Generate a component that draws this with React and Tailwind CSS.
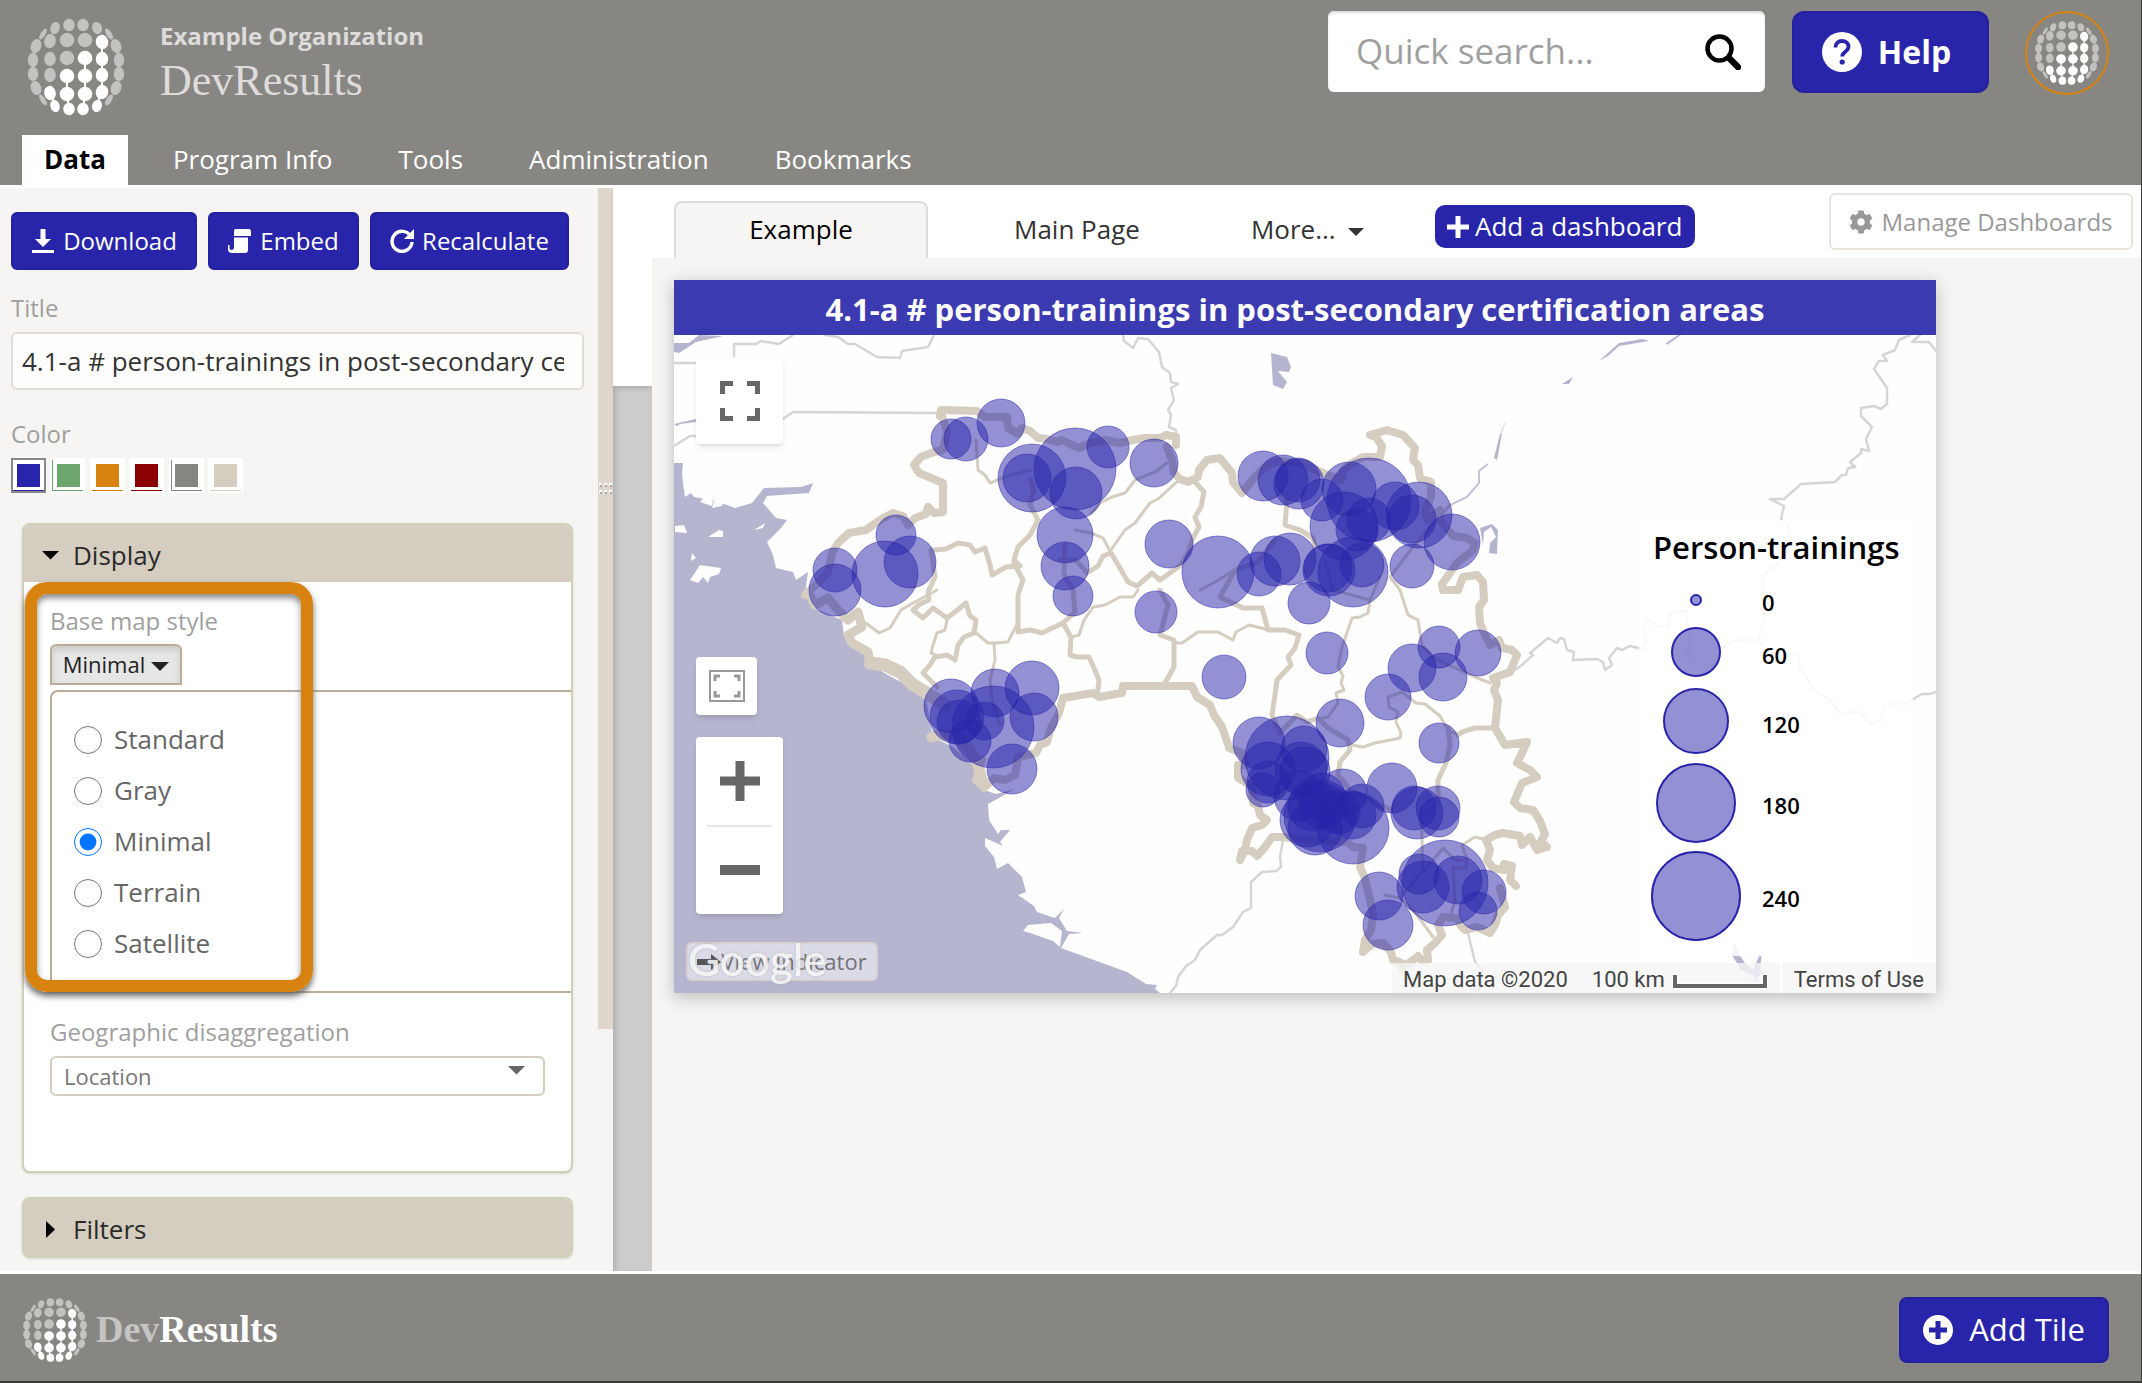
import { useState } from "react";
import { FaCog } from "react-icons/fa";

const COLORS = [
  { name: "Blue", swatch: "bg-[#2825aa]", edge: "border-b border-[#2825aa]" },
  { name: "Green", swatch: "bg-[#6ca66c]", edge: "border-b border-l border-[#6ca66c]" },
  { name: "Orange", swatch: "bg-[#d8830f]", edge: "border-b border-[#d8830f]" },
  { name: "Red", swatch: "bg-[#8b0000]", edge: "border-b border-[#8b0000]" },
  { name: "Gray", swatch: "bg-[#888683]", edge: "border-b border-l border-[#888683]" },
  { name: "Tan", swatch: "bg-[#d5cdbf]", edge: "border-b border-[#d5cdbf]" },
];

const MAP_STYLES = ["Standard", "Gray", "Minimal", "Terrain", "Satellite"];

const NAV = ["Program Info", "Tools", "Administration", "Bookmarks"];

// cx, cy, r
const BUBBLES = [
  [951, 439, 20], [966, 439, 22], [1001, 423, 24], [1032, 478, 34], [1027, 478, 24],
  [1075, 469, 41], [1076, 493, 26], [1108, 447, 21], [1154, 463, 24], [1065, 535, 28],
  [1065, 566, 24], [1073, 596, 20], [896, 535, 20], [910, 562, 26], [885, 574, 33],
  [835, 570, 22], [835, 590, 26], [1169, 544, 24], [1156, 612, 21], [1224, 677, 22],
  [951, 706, 27], [957, 717, 27], [959, 722, 22], [995, 693, 24], [993, 727, 41],
  [985, 721, 19], [970, 741, 21], [1032, 688, 27], [1034, 717, 24], [1012, 769, 25],
  [1263, 476, 25], [1283, 480, 25], [1299, 484, 25], [1298, 480, 22], [1322, 500, 21],
  [1349, 489, 27], [1369, 500, 42], [1344, 526, 34], [1369, 520, 22], [1357, 530, 21],
  [1395, 506, 24], [1419, 515, 33], [1412, 519, 24], [1452, 542, 28], [1412, 566, 22],
  [1218, 572, 36], [1275, 561, 25], [1290, 559, 26], [1259, 574, 22], [1329, 570, 26],
  [1328, 568, 24], [1353, 572, 35], [1362, 565, 22], [1309, 603, 21], [1327, 653, 21],
  [1439, 647, 21], [1478, 653, 23], [1412, 668, 24], [1443, 677, 24], [1388, 697, 23],
  [1340, 723, 24], [1439, 743, 20], [1259, 743, 26], [1287, 758, 42], [1304, 749, 23],
  [1268, 769, 27], [1301, 768, 26], [1305, 772, 25], [1268, 782, 21], [1263, 790, 17],
  [1299, 796, 25], [1343, 793, 24], [1362, 806, 22], [1352, 815, 24], [1353, 828, 36],
  [1392, 788, 25], [1320, 816, 36], [1315, 828, 27], [1307, 820, 27], [1322, 796, 23],
  [1323, 806, 23], [1313, 806, 25], [1338, 812, 22], [1417, 813, 26], [1414, 808, 22],
  [1438, 808, 22], [1439, 817, 20], [1445, 883, 43], [1419, 874, 20], [1423, 887, 26],
  [1458, 880, 24], [1484, 892, 22], [1478, 911, 19], [1379, 896, 24], [1388, 925, 25],
];

// cy, r, label, label baseline
const LEGEND = [
  [600, 5, "0", 611],
  [652, 24, "60", 664],
  [721, 32, "120", 733],
  [803, 39, "180", 814],
  [896, 44, "240", 907],
];

const WATER = [
  "674,463 683,463 682,473 683,483 694,497 713,500 735,508 752,503 764,488 801,487 813,483 809,493 767,496 763,503 776,518 787,520 781,528 767,542 773,555 776,568 793,572 796,580 808,572 805,593 818,610 842,620 844,637 866,655 870,665 897,680 925,693 933,737 953,747 976,767 984,790 996,794 1015,789 988,804 989,820 998,834 1001,830 1010,830 1000,842 1003,846 985,838 985,846 994,857 997,869 1008,863 1022,877 1026,892 1018,895 1034,906 1037,912 1055,918 1064,909 1059,918 1067,931 1083,933 1069,934 1061,948 1127,972 1146,984 1157,985 1155,989 1160,993 674,993",
  "674,343 689,343 699,335 723,336 696,342 679,353 674,352",
  "674,424 696,419 696,422 680,424 677,426 674,424",
  "1271,353 1287,357 1291,367 1289,372 1278,371 1287,382 1283,389 1273,385",
  "1480,528 1492,524 1498,530 1497,554 1489,553 1490,543 1496,537 1491,527 1484,532 1483,545",
  "1500,434 1502,433 1497,460 1494,458",
  "1599,361 1619,343 1642,339 1649,341 1619,346 1608,356",
  "1667,345 1681,335 1678,335 1666,343",
  "1562,384 1573,377 1569,384",
  "1732,955 1734,942 1740,956 1745,963 1753,970 1762,950 1760,970 1764,974 1757,977 1757,984 1754,976 1741,970",
];

const ISLANDS = [
  "1023,931 1028,925 1051,923 1062,931 1060,947 1053,941 1030,933",
  "683,483 689,487 694,491 685,497",
  "700,502 711,487 713,501 712,506",
  "728,482 722,506 712,508 715,497",
  "675,526 684,525 687,533 675,532",
  "708,537 719,530 723,531 723,537",
  "692,553 696,558 691,561",
  "690,580 700,565 721,568 719,574 710,577 708,583 703,577 698,583",
  "754,530 765,523 763,528",
];

const GRAY_LINES = [
  "674,363 734,363 734,344 756,344 761,341 779,344 793,335",
  "825,335 838,337 848,344 855,344 877,357 900,358 902,351 928,347 934,335",
  "1123,335 1124,341 1133,348 1138,338 1148,339 1159,352 1162,367 1170,373 1171,382 1178,384 1171,388 1174,400 1168,410 1171,415 1169,427 1176,430 1176,436",
  "783,419 793,412 940,413",
  "674,446 690,436 700,436",
  "1910,335 1899,340 1895,350 1883,355 1887,361 1879,361 1874,369 1887,388 1887,404 1881,409 1874,406 1861,408 1861,416 1872,427 1866,439 1869,451 1861,449 1861,453 1850,462 1855,467 1848,468 1846,475 1842,475 1835,482 1801,484 1784,499 1770,499 1784,506 1781,519 1788,525 1790,540 1780,562 1763,575 1763,590 1764,620 1758,640",
  "1920,335 1912,342 1929,342 1936,351",
  "1515,670 1522,665 1533,655 1530,653 1548,638 1557,643 1560,638 1564,639 1567,650 1574,652 1573,660 1597,659 1603,662 1605,670 1612,665 1609,658 1617,648 1622,650 1630,646 1643,649 1646,640 1643,630 1646,617 1655,625 1668,628 1670,614 1686,610 1690,640 1688,655 1700,665 1712,665 1725,645 1740,640 1758,640 1770,653 1798,654 1800,668 1814,690 1830,700 1840,714 1848,713 1860,712 1870,724 1881,720 1884,708 1896,702 1905,704 1915,698 1922,694 1930,694 1936,692",
  "1283,840 1280,857 1281,867 1276,871 1262,872 1251,882 1251,908 1243,912 1233,927 1222,935 1217,935 1200,950 1195,960 1186,966 1178,977 1176,986 1170,993",
  "1468,933 1475,962 1482,970 1479,993",
];

const THICK_BORDERS = [
  "940,416 941,410 977,411 985,417 1007,417 1008,428 1018,434 1022,428 1030,431 1038,438 1047,439 1057,442 1062,440 1070,444 1079,448 1090,443 1106,440 1120,443 1133,440 1145,438 1160,438 1166,435 1176,437 1176,445",
  "941,413 947,432 943,450 931,453 921,457 914,465 919,473 943,483 943,512 934,513 928,507 926,514 915,518 908,525 903,516 893,513 880,520 866,530 849,533 838,543 832,553 828,573 818,583 805,595",
  "1229,748 1242,753 1245,765 1238,765 1238,778 1245,782 1252,787 1253,803 1258,806 1260,815 1267,820 1262,825 1252,828 1247,840 1245,850 1240,860 1242,851 1252,851 1257,856 1265,847 1272,837 1283,837 1310,840 1347,842 1353,847 1363,848 1360,867 1364,876 1367,887 1370,900 1373,913 1371,930 1365,940 1363,952 1372,944 1383,943 1391,952 1393,960 1402,963 1402,968 1413,960 1418,956 1422,961 1428,960 1427,950 1436,942 1442,935 1438,925 1443,917 1457,918 1461,926 1465,930 1477,927 1490,933 1495,925 1498,915 1505,907 1500,888",
  "1516,886 1510,880 1512,866 1504,864 1504,870 1493,868 1487,860 1490,850 1486,840 1495,835 1503,833 1520,836 1522,845 1530,837 1537,850 1547,847 1541,841 1545,834 1540,821 1533,810 1520,808 1514,802 1522,783 1537,777 1530,770 1517,763 1522,753 1527,742 1505,745 1495,728 1498,700 1494,690 1497,683 1493,678 1510,672 1517,655 1512,650 1502,648 1499,640 1490,645 1484,633 1480,623 1479,607 1484,600 1483,582 1477,575 1463,577 1458,590 1443,590 1442,584 1450,573 1457,563 1473,550 1475,543 1467,538 1453,536 1440,520 1440,510 1428,520 1425,512 1431,497 1431,482 1420,478 1418,465 1413,460 1415,448 1403,435 1387,430 1370,435 1376,437 1382,446 1380,457 1363,457 1352,463 1343,470 1341,480 1323,473 1300,463 1280,461 1267,465 1254,478 1242,493 1233,482 1232,473 1220,458 1207,460 1199,470 1198,477 1188,482 1180,479 1174,473 1172,460 1167,447",
  "982,760 976,780 984,788 994,778 1005,780 1015,775 1018,757 1036,753 1040,745 1047,742 1050,730 1059,713 1063,698 1093,693 1099,697 1122,693 1123,686 1192,686 1197,697 1210,705 1214,715 1222,727 1229,747",
];

const MID_BORDERS = [
  "1196,483 1204,492 1201,507 1195,517 1199,527 1192,540 1188,553 1180,566 1174,570 1160,580 1152,573 1137,586 1128,582 1120,568 1111,553 1103,556 1098,566 1087,573 1076,560 1060,560",
  "1031,480 1034,490 1030,505 1038,520 1030,535 1018,547 1014,560 1020,566 1006,567 992,575 990,565 985,548 975,552 970,545 958,543 946,549 934,550",
  "931,550 935,577 928,592 929,600 920,604 913,610 923,618 933,608 947,618 955,612 966,603 970,616 976,620 974,633 964,637 958,645 955,660 947,655 935,657 930,665 923,673 937,687",
  "1014,563 1023,580 1018,595 1018,632 1030,630 1042,633 1063,623 1071,637 1070,655 1077,657 1089,657 1094,668 1099,680 1097,697",
  "1063,623 1075,612 1073,590 1064,575 1065,545",
  "1160,590 1168,605 1160,635 1174,640 1174,667 1165,683",
  "1275,540 1258,562 1235,570 1220,597 1243,608 1262,608 1268,630 1285,630 1299,635 1295,648 1288,657 1291,665 1277,680 1275,695 1272,715 1280,733 1297,715 1307,722 1318,718 1328,728 1348,740 1350,750 1340,762 1338,775 1350,790 1372,802 1392,810",
  "1287,500 1285,525 1300,530 1313,538 1315,547",
  "1448,728 1450,745 1446,763 1438,780 1438,800",
  "1458,735 1462,732 1475,728 1495,728",
];

const THIN_BORDERS = [
  "1091,513 1100,503 1112,497 1125,493 1135,480 1155,472 1167,463",
  "1111,550 1120,537 1125,530 1135,523 1150,503 1158,499 1179,480",
  "1075,530 1091,533 1103,538 1111,553",
  "976,440 978,470 985,475 990,483 1010,475 1031,470",
  "866,623 879,633 890,628 901,610 913,603 937,590",
  "947,620 945,630 937,633 933,645 931,653 938,656",
  "976,633 988,643 994,643 1008,642 1014,630 1018,623",
  "994,643 995,660 990,680 992,700 1000,725",
  "1071,637 1079,635 1084,620 1093,607 1105,605 1120,597 1133,597 1138,590",
  "1174,643 1182,643 1198,632 1218,632 1233,640 1236,632 1249,625 1269,630",
  "1200,590 1215,582 1235,570",
  "1380,577 1370,600 1368,613 1360,617 1352,618 1342,647 1338,667 1343,676 1341,683 1344,690 1336,693 1338,703 1328,717 1313,720",
  "1325,560 1333,590 1370,600",
  "1450,505 1413,547 1390,577 1400,590 1408,615 1418,620 1422,645 1434,658 1453,667 1475,677 1490,683",
  "1352,745 1363,747 1375,743 1400,738 1401,733 1396,722 1398,712 1389,707 1388,697 1402,692 1416,703 1425,704 1440,716 1448,730 1458,735",
  "1421,810 1423,870 1400,898 1385,895",
  "1467,860 1462,845 1475,837 1483,839 1488,842",
  "1423,872 1443,848 1455,860 1467,860 1466,868 1453,868 1455,900 1450,918",
  "1400,898 1417,915 1433,937",
];

function Caret({ className }) {
  return (
    <svg viewBox="0 0 18 9" className={className} fill="currentColor" aria-hidden="true">
      <path d="M0 0h18L9 9z" />
    </svg>
  );
}

// dotted globe, six rows of six
function Globe({ className }) {
  const xs = [
    [-33, -21, -7, 7, 21, 33],
    [-40, -26, -9, 9, 26, 40],
    [-43, -26, -9, 9, 26, 43],
  ];
  const ys = [
    [-33, -39, -42, -42, -39, -33],
    [-21, -26, -27, -27, -25, -21],
    [-7, -8, -9, -9, -8, -7],
  ];
  const rx = [2.8, 5.4, 6.8, 6.8, 5.8, 3.2];
  const bright = [[], [4], [3, 4], [2, 3, 4], [1, 2, 3, 4], [1, 2, 3, 4]];
  const tilt = [32, 18, 5, -5, -18, -32];
  const dots = [];
  for (let r = 0; r < 6; r++) {
    const k = r < 3 ? r : 5 - r;
    const flip = r < 3 ? 1 : -1;
    for (let c = 0; c < 6; c++) {
      dots.push({
        x: xs[k][c],
        y: ys[k][c] * flip,
        rx: k === 0 ? rx[c] * 0.85 : c === 0 || c === 5 ? 5.2 : rx[c] * 1.08,
        ry: k === 0 ? 6.2 : 7.2,
        rot: k === 2 ? 0 : tilt[c] * flip * (k === 0 ? 1 : 0.6),
        on: bright[r].includes(c),
      });
    }
  }
  return (
    <svg viewBox="-50 -50 100 100" className={className} aria-hidden="true">
      <path
        d="M26-25V25L20 39M9-9V27L7 43M-9 9V27L-7 43M-26 25L-20 39"
        stroke="#fff"
        strokeWidth="2"
        fill="none"
      />
      {dots.map((d, i) => (
        <ellipse
          key={i}
          cx={d.x}
          cy={d.y}
          rx={d.rx}
          ry={d.ry}
          transform={`rotate(${d.rot} ${d.x} ${d.y})`}
          fill={d.on ? "#fff" : "#c3c2c0"}
        />
      ))}
    </svg>
  );
}

function Header() {
  return (
    <header className="bg-[#888683]">
      <div className="flex h-[135px] justify-between pr-8 pl-[26px]">
        <div className="flex gap-[34px] pt-[17px]">
          <Globe className="size-[100px]" />
          <div className="flex flex-col gap-1.5 pt-[3px] text-[#dddcdb]">
            <p className="text-[24px] leading-8 font-bold">Example Organization</p>
            <p className="font-['Liberation_Serif',serif] text-[44px] leading-[46px]">DevResults</p>
          </div>
        </div>

        <div className="flex items-start pt-[11px]">
          <form
            className="mr-[27px] flex h-[81px] w-[437px] items-center rounded-md bg-white pr-6 pl-7 shadow-[inset_0_2px_2px_#ddd]"
            onSubmit={(e) => e.preventDefault()}
          >
            <input
              type="search"
              aria-label="Quick search"
              placeholder="Quick search..."
              className="min-w-0 flex-1 bg-transparent text-[35px] outline-none placeholder:text-[#9f9f9f]"
            />
            <button type="submit" aria-label="Search">
              <svg viewBox="0 0 36 36" className="size-9" fill="none" stroke="#000" aria-hidden="true">
                <circle cx="14.500" cy="14.500" r="12" strokeWidth="4.500" />
                <path d="M24 24l9 9" strokeWidth="6.500" strokeLinecap="round" />
              </svg>
            </button>
          </form>
          <button className="mr-9 flex h-[82px] w-[197px] items-center justify-center gap-4 rounded-xl border-2 border-[#2421a0] bg-[#2825aa] pr-2 text-[32px] font-bold text-white">
            <svg viewBox="0 0 40 40" className="size-10" aria-hidden="true">
              <circle cx="20" cy="20" r="20" fill="#fff" />
              <path
                d="M13.500 15.500c0-4.500 3-6.500 6.500-6.500s6.500 2.200 6.500 5.800c0 4.700-6.300 5-6.300 9.700"
                fill="none"
                stroke="#2825aa"
                strokeWidth="3.800"
              />
              <circle cx="20.200" cy="30" r="2.600" fill="#2825aa" />
            </svg>
            Help
          </button>
          <button
            aria-label="Account"
            className="flex size-[84px] items-center justify-center rounded-full border-2 border-[#d8830f]"
          >
            <Globe className="size-[66px]" />
          </button>
        </div>
      </div>

      <nav className="flex h-[50px] gap-6 px-[22px] text-[26px] text-white">
        <a href="#data" className="flex items-center bg-white px-[22px] pb-0.5 font-bold text-black">
          Data
        </a>
        {NAV.map((item) => (
          <a key={item} href="#nav" className="flex items-center px-[21px] pb-0.5">
            {item}
          </a>
        ))}
      </nav>
    </header>
  );
}

function PanelButton({ children, className }) {
  return (
    <button
      className={`flex h-[58px] items-center justify-center gap-2 rounded-md border-2 border-[#2421a0] bg-[#2825aa] text-[24px] text-white ${className}`}
    >
      {children}
    </button>
  );
}

function Sidebar() {
  const [title, setTitle] = useState("4.1-a # person-trainings in post-secondary certification areas");
  const [color, setColor] = useState("Blue");
  const [mapStyle, setMapStyle] = useState("Minimal");

  return (
    <aside className="flex w-[652px] shrink-0">
      <div className="w-[598px] bg-[#f6f5f3] px-[11px] pt-6 pb-[13px]">
        <div className="flex gap-[11px]">
          <PanelButton className="w-[186px]">
            <svg viewBox="0 0 24 24" className="size-6" fill="#fff" aria-hidden="true">
              <path d="M9.500 0h5v10h5.500L12 18 4 10h5.500zM1 21h22v3H1z" />
            </svg>
            Download
          </PanelButton>
          <PanelButton className="w-[151px]">
            <svg viewBox="0 0 24 24" className="size-6" fill="#fff" aria-hidden="true">
              <path d="M7 0h14q2 0 2 3v4H6V3q0-3 1-3zM6 8.500h14V21q0 3-3 3H4q-4 0-4-4v-4h1.500v3q0 2 2 2t2.500-2z" />
            </svg>
            Embed
          </PanelButton>
          <PanelButton className="w-[199px]">
            <svg viewBox="0 0 24 24" className="size-6" aria-hidden="true">
              <path d="M20.500 7A10 10 0 1 0 22 13" fill="none" stroke="#fff" strokeWidth="3.400" />
              <path d="M24 0v10H14z" fill="#fff" />
            </svg>
            Recalculate
          </PanelButton>
        </div>

        <label htmlFor="title" className="mt-[22px] mb-2 block text-[24px] leading-8 text-[#9f9f9f]">
          Title
        </label>
        <input
          id="title"
          value={title}
          onChange={(e) => setTitle(e.target.value)}
          className="h-[58px] w-[573px] rounded-md border-2 border-[#e3dcd5] bg-[#fdfdfb] pr-[18px] pl-[9px] text-[26px] text-[#333] outline-none"
        />

        <p className="mt-7 mb-2 text-[24px] leading-8 text-[#9f9f9f]">Color</p>
        <div className="flex w-[232px] justify-between">
          {COLORS.map((c) => (
            <button
              key={c.name}
              aria-label={c.name}
              onClick={() => setColor(c.name)}
              className={`size-[35px] bg-white ${color === c.name ? "border-2 border-[#888]" : "p-0.5"}`}
            >
              <span className={`flex h-[31px] items-center justify-center ${c.edge}`}>
                <span className={`size-[23px] ${c.swatch}`} />
              </span>
            </button>
          ))}
        </div>

        {/* Display */}
        <section className="relative mr-[14px] ml-[11px] mt-[30px] rounded-lg border-2 border-[#cdd1b5] bg-white shadow-sm">
          <button className="flex h-[57px] w-full items-center gap-3.5 rounded-t-md bg-[#d5cdbf] pt-1 pl-[18px] text-[26px] text-[#2b2b2b]">
            <Caret className="w-[17px] text-black" />
            Display
          </button>

          <div className="pt-[23px] pb-[75px] pl-[26px]">
            <p className="mb-[7px] text-[24px] leading-8 text-[#9f9f9f]">Base map style</p>
            <button className="flex h-[41px] w-[132px] items-center justify-center gap-1.5 rounded-t-md border-2 border-[#beac98] bg-[#e6e6e6] text-[22px] text-[#222] shadow-[inset_0_4px_6px_#ccc]">
              Minimal
              <Caret className="mt-1 w-[18px]" />
            </button>
            <fieldset className="mt-[5px] h-[303px] rounded-tl-lg border-y-2 border-l-2 border-[#beac98] pt-[22px] pl-[22px]">
              {MAP_STYLES.map((s) => (
                <label key={s} className="flex h-[51px] items-center gap-3 text-[26px] text-[#666]">
                  <input
                    type="radio"
                    name="map-style"
                    checked={mapStyle === s}
                    onChange={() => setMapStyle(s)}
                    className="size-7 accent-[#0075ff]"
                  />
                  {s}
                </label>
              ))}
            </fieldset>

            <label htmlFor="geo" className="mt-[23px] mb-2 block text-[24px] leading-8 text-[#9f9f9f]">
              Geographic disaggregation
            </label>
            <div className="relative mr-[26px]">
              <select
                id="geo"
                className="h-10 w-full appearance-none rounded-md border-2 border-[#d5cdbf] bg-white px-3 text-[22px] leading-8 text-[#777] outline-none"
              >
                <option>Location</option>
              </select>
              <Caret className="pointer-events-none absolute top-2.5 right-5 w-[17px] text-[#666]" />
            </div>
          </div>

          {/* callout around the base map style picker */}
          <div className="pointer-events-none absolute top-[57px] left-px h-[410px] w-[288px] rounded-[22px] border-12 border-[#d8830f] shadow-[0_4px_6px_#666,inset_0_4px_6px_#888]" />
        </section>

        <section className="mr-[14px] ml-[11px] mt-6 rounded-lg border-2 border-[#cdd1b5] shadow-sm">
          <button className="flex h-[57px] w-full items-center gap-[18px] rounded-md bg-[#d5cdbf] pt-1 pl-[22px] text-[26px] text-[#2b2b2b]">
            <svg viewBox="0 0 9 17" className="w-[9px]" aria-hidden="true">
              <path d="M0 0l9 8.500L0 17z" />
            </svg>
            Filters
          </button>
        </section>
      </div>

      {/* splitter */}
      <div className="w-[15px] bg-[#f6f5f3]">
        <div className="h-[841px] bg-[#dfd6cd] pt-[294px]">
          <svg viewBox="0 0 15 12" className="w-[15px]" aria-hidden="true">
            {[1, 6, 11].map((x) => (
              <g key={x}>
                <path d={`M${x} 1h3v3h-3zM${x} 8h3v3h-3z`} fill="#fff" />
                <path d={`M${x + 1} 3h2v2h-2zM${x + 1} 10h2v2h-2z`} fill="#aaa69e" />
              </g>
            ))}
          </svg>
        </div>
      </div>
      <div className="flex-1 bg-[#ccc] shadow-[inset_6px_0_6px_-4px_#aaa]">
        <div className="h-[198px] bg-white shadow-md" />
      </div>
    </aside>
  );
}

function MapDrawing() {
  return (
    <svg viewBox="674 335 1262 658" className="block w-full" role="img" aria-label="Person-trainings map">
      <rect x="674" y="335" width="1262" height="658" fill="#fefefe" />
      {WATER.map((p) => (
        <polygon key={p} points={p} fill="#b6b5cf" />
      ))}
      {ISLANDS.map((p) => (
        <polygon key={p} points={p} fill="#fefefe" />
      ))}
      <polyline points="1505,423 1500,435" fill="none" stroke="#d6d6e2" />
      <polyline points="1488,464 1479,471 1479,483 1467,497 1450,505 1435,520" fill="none" stroke="#c3c2d6" strokeWidth="2" />
      <path d="M674 565H1936M1186 335V993M1746 335V993" stroke="#000" strokeOpacity=".03" />
      <g fill="none" strokeLinejoin="round" strokeLinecap="round">
        <g stroke="#d5d5d5" strokeWidth="2.500">
          {GRAY_LINES.map((p) => (
            <polyline key={p} points={p} />
          ))}
        </g>
        <g stroke="#d5cdbf">
          <g strokeWidth="3">
            {THIN_BORDERS.map((p) => (
              <polyline key={p} points={p} />
            ))}
          </g>
          <g strokeWidth="5">
            {MID_BORDERS.map((p) => (
              <polyline key={p} points={p} />
            ))}
          </g>
          <g strokeWidth="8">
            {THICK_BORDERS.map((p) => (
              <polyline key={p} points={p} />
            ))}
          </g>
          {/* coast */}
          <polyline points="808,592 815,605 828,598 838,610 848,620 858,612 862,627 848,635 852,643 868,652 870,663" strokeWidth="9" />
          <polyline points="870,663 885,665 900,672 912,684 925,692 945,705" strokeWidth="13" />
          <polyline points="932,737 938,735 955,735 970,750 978,765 982,780" strokeWidth="11" />
        </g>
      </g>

      <g fill="#2724aa" fillOpacity=".5" stroke="#2724aa" strokeOpacity=".5">
        {BUBBLES.map(([cx, cy, r], i) => (
          <circle key={i} cx={cx} cy={cy} r={r} />
        ))}
      </g>

      {/* legend */}
      <rect x="1639" y="520" width="274" height="436" fill="#fff" fillOpacity=".85" />
      <text
        x="1653"
        y="559"
        className="font-['Open_Sans',sans-serif] text-[31px] font-semibold"
      >
        Person-trainings
      </text>
      {LEGEND.map(([cy, r, label, base]) => (
        <g key={label}>
          <circle cx="1696" cy={cy} r={r} fill="#2724aa" fillOpacity=".5" stroke="#2724aa" strokeWidth="2" />
          <text x="1762" y={base} className="font-['Open_Sans',sans-serif] text-[22px] font-semibold">
            {label}
          </text>
        </g>
      ))}
    </svg>
  );
}

function MapTile() {
  return (
    <article className="w-[1262px] shadow-[0_4px_16px_#bbb]">
      <h2 className="flex h-[55px] items-center justify-center bg-[#3c3ab0] pt-1 pr-5 text-[31px] font-bold text-white">
        4.1-a # person-trainings in post-secondary certification areas
      </h2>
      <div className="relative">
        <MapDrawing />

        {/* map controls */}
        <div className="absolute top-[22px] left-[22px] flex flex-col items-start">
          <button
            aria-label="Toggle fullscreen"
            className="flex size-[87px] items-center justify-center rounded bg-white shadow-md"
          >
            <svg viewBox="0 0 40 40" className="size-10" fill="none" stroke="#666" strokeWidth="5" aria-hidden="true">
              <path d="M2.500 13V2.500H13M27 2.500h10.500V13M37.500 27v10.500H27M13 37.500H2.500V27" />
            </svg>
          </button>
          <button
            aria-label="Reset view"
            className="mt-[213px] flex h-[58px] w-[61px] items-center justify-center rounded bg-white shadow-md"
          >
            <svg viewBox="0 0 36 32" className="w-9" fill="none" stroke="#999" aria-hidden="true">
              <rect x="1" y="1" width="34" height="30" strokeWidth="2" />
              <path d="M6 11V6h5M25 6h5v5M30 21v5h-5M11 26H6v-5" strokeWidth="3" />
            </svg>
          </button>
          <div className="mt-[22px] flex h-[177px] w-[87px] flex-col items-center rounded bg-white shadow-md">
            <button aria-label="Zoom in" className="flex w-full flex-1 items-center justify-center">
              <svg viewBox="0 0 40 40" className="size-10" fill="#666" aria-hidden="true">
                <path d="M15.500 0h9v15.500H40v9H24.500V40h-9V24.500H0v-9h15.500z" />
              </svg>
            </button>
            <hr className="w-[65px] border-t-2 border-[#e6e6e6]" />
            <button aria-label="Zoom out" className="flex w-full flex-1 items-center justify-center">
              <svg viewBox="0 0 40 10" className="w-10" fill="#666" aria-hidden="true">
                <path d="M0 0h40v10H0z" />
              </svg>
            </button>
          </div>
        </div>

        <button className="absolute bottom-3 left-3 flex h-[39px] w-[192px] items-center justify-center rounded-md border-2 border-[#d5cdc9]/70 bg-white/50 text-[22px] text-[#555]/80">
          <svg viewBox="0 0 24 16" className="w-6" fill="#555" aria-hidden="true">
            <path d="M0 5h14V0l10 8-10 8v-5H0z" />
          </svg>
          View Indicator
        </button>
        <span className="pointer-events-none absolute bottom-2 left-3.5 font-['Lato',sans-serif] text-[44px] leading-[52px] font-medium text-white/80 [text-shadow:0_0_3px_#9998]">
          Google
        </span>

        <div className="absolute right-0 bottom-0 flex h-[30px] font-['Roboto',sans-serif] text-[22px] leading-[33px] text-[#444]">
          <div className="flex gap-6 bg-[#f5f5f5]/80 pr-3 pl-[11px]">
            <span>Map data ©2020</span>
            <span className="flex gap-[7px]">
              100 km
              <svg viewBox="0 0 96 30" className="w-[96px]" fill="none" aria-hidden="true">
                <path d="M3 11v12h90V11" stroke="#fff" strokeWidth="7" />
                <path d="M3 12v11h90V12" stroke="#666" strokeWidth="4" />
              </svg>
            </span>
          </div>
          <a href="#terms" className="ml-0.5 bg-[#f5f5f5]/80 px-3">
            Terms of Use
          </a>
        </div>
      </div>
    </article>
  );
}

function Dashboard() {
  return (
    <main className="min-w-0 flex-1 bg-[#f6f5f3]">
      <div className="flex h-[70px] items-start justify-between bg-white pt-[5px] pr-2 pl-[22px]">
        <div className="mt-2 flex h-[57px] items-center text-[26px] text-[#333]">
          <a
            href="#example"
            className="flex h-full w-[254px] items-center justify-center rounded-t-lg border-x-2 border-t-2 border-[#dcdcdc] bg-[#f6f5f3] pb-0.5 text-black"
          >
            Example
          </a>
          <a href="#main" className="ml-[86px]">
            Main Page
          </a>
          <button className="ml-[111px] flex items-center gap-3">
            More...
            <Caret className="mt-1 w-4" />
          </button>
          <button className="ml-[71px] flex h-[43px] w-[260px] items-center justify-center gap-1.5 self-start rounded-[10px] bg-[#2825aa] mt-1 text-white">
            <svg viewBox="0 0 22 22" className="w-[22px]" fill="#fff" aria-hidden="true">
              <path d="M8.500 0h5v8.500H22v5h-8.500V22h-5v-8.500H0v-5h8.500z" />
            </svg>
            Add a dashboard
          </button>
        </div>
        <button className="flex h-[57px] w-[304px] items-center justify-center gap-2 rounded-md border-2 border-[#e9e4dc] text-[24px] text-[#999]">
          <FaCog className="size-6" />
          Manage Dashboards
        </button>
      </div>
      <div className="px-[22px] pt-[22px]">
        <MapTile />
      </div>
    </main>
  );
}

export default function App() {
  return (
    <div className="flex min-h-screen flex-col border-r border-b-2 border-[#3a3938] bg-white font-['Open_Sans',sans-serif]">
      <Header />
      <div className="my-[3px] flex flex-1">
        <Sidebar />
        <Dashboard />
      </div>
      <footer className="flex h-[107px] items-center justify-between bg-[#888683] pt-1 pr-8 pl-[22px]">
        <div className="flex items-center gap-2">
          <Globe className="size-[66px]" />
          <span className="font-['Liberation_Serif',serif] text-[38px] font-bold text-white">
            <span className="text-[#c5c4c2]">Dev</span>Results
          </span>
        </div>
        <button className="flex h-[66px] w-[210px] items-center justify-center gap-4 rounded-lg border-2 border-[#2421a0] bg-[#2825aa] text-[31px] text-white">
          <svg viewBox="0 0 30 30" className="w-[30px]" aria-hidden="true">
            <circle cx="15" cy="15" r="15" fill="#fff" />
            <path d="M12.500 6h5v6.500H24v5h-6.500V24h-5v-6.500H6v-5h6.500z" fill="#2825aa" />
          </svg>
          Add Tile
        </button>
      </footer>
    </div>
  );
}
